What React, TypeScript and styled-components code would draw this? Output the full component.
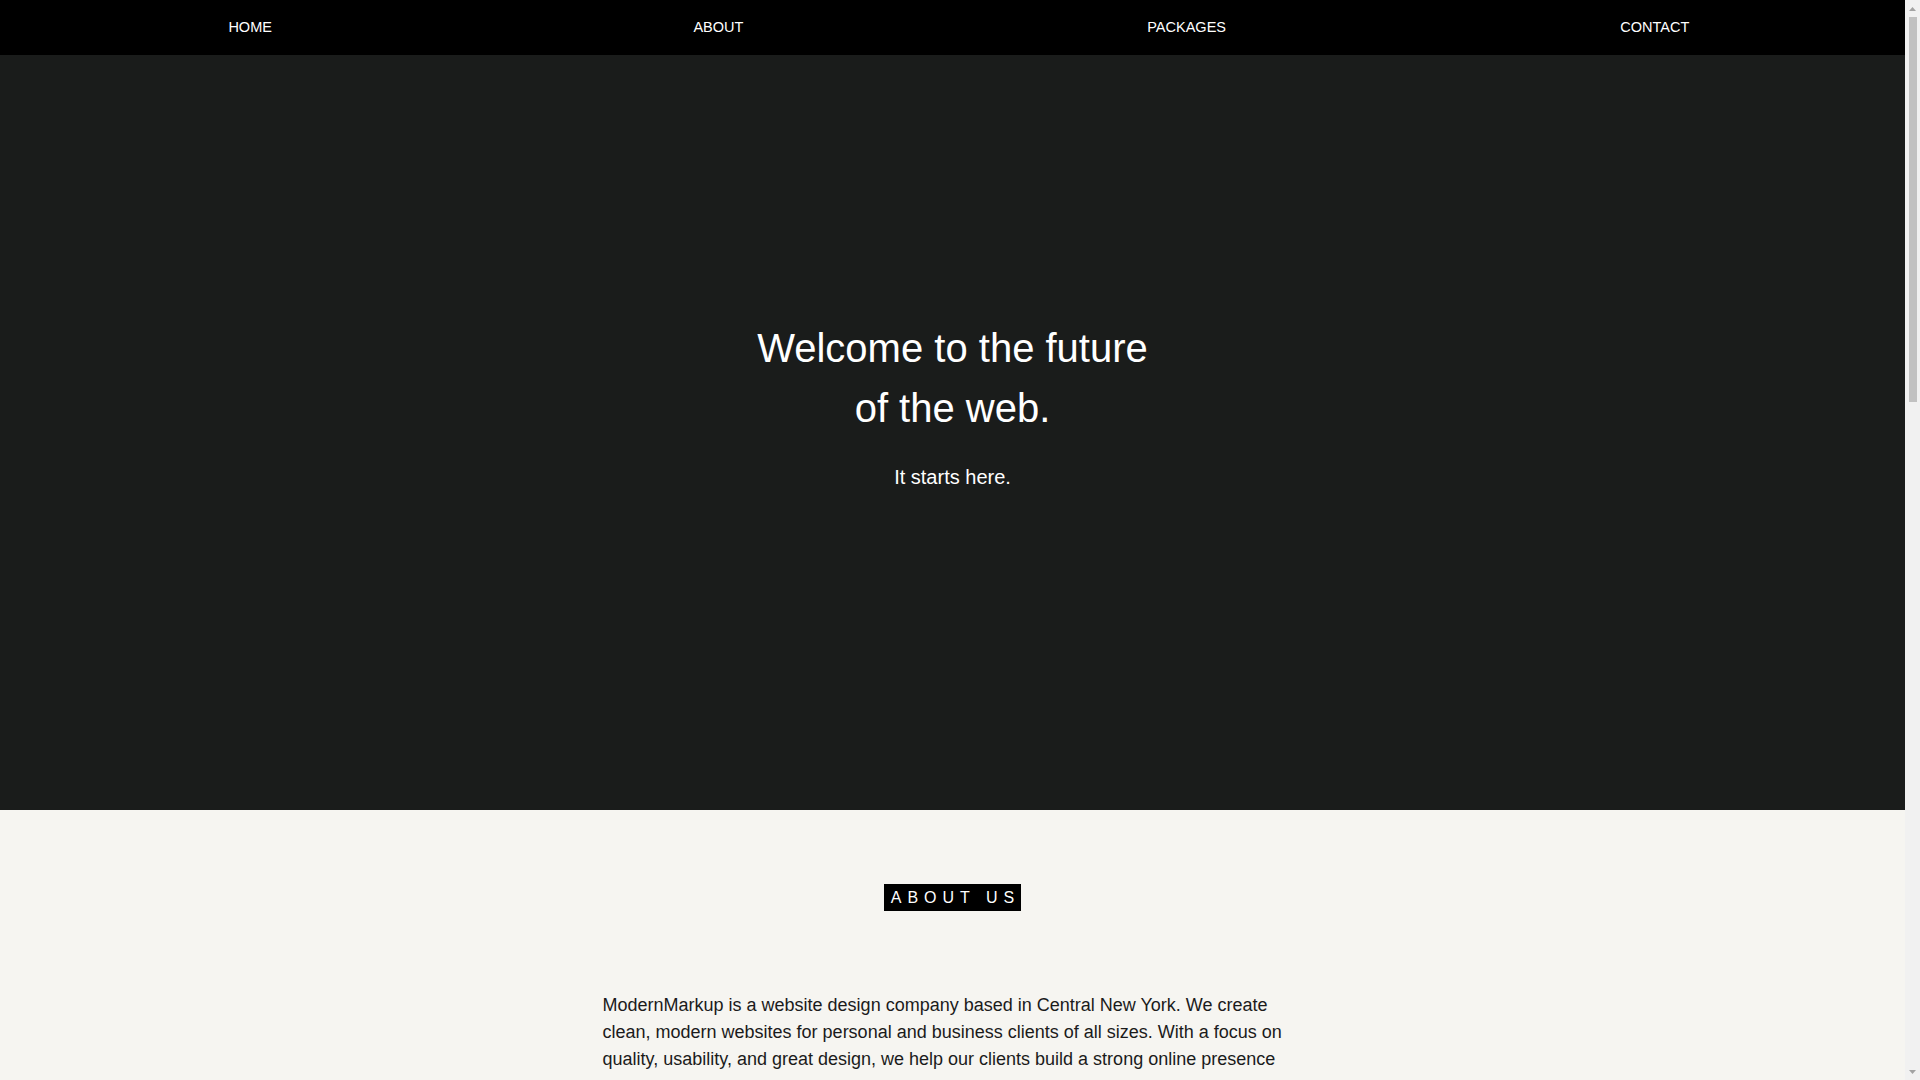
import React from 'react'
import styled, { createGlobalStyle } from 'styled-components'

const GlobalStyle = createGlobalStyle`
  html, body {
    margin: 0;
    padding: 0;
  }
  body {
    margin-right: 15px;
    font-family: "Liberation Sans", Arial, sans-serif;
    background: #f6f5f1;
    color: #1b1b1b;
  }
  * {
    box-sizing: border-box;
  }
`

// the browser's own scroll bar, drawn over the right edge
const Scrollbar = styled.div`
  position: fixed;
  top: 0;
  right: 0;
  width: 15px;
  height: 100vh;
  display: flex;
  flex-direction: column;
  align-items: center;
  background: #f1f1f1;
`

const ScrollArrow = styled.div`
  display: flex;
  align-items: center;
  justify-content: center;
  width: 15px;
  height: 17px;
  flex-shrink: 0;
`

const ScrollTrack = styled.div`
  flex: 1;
  width: 100%;
  display: flex;
  justify-content: center;
`

const ScrollThumb = styled.div`
  width: 8px;
  height: 385px;
  background: #c1c1c1;
`

const Nav = styled.nav`
  display: flex;
  height: 55px;
  padding: 0 16px;
  background: #000;
`

const NavLink = styled.a`
  flex: 1;
  text-align: center;
  line-height: 55px;
  font-size: 14.5px;
  color: #fff;
  text-decoration: none;
  text-transform: uppercase;
`

const Hero = styled.header`
  display: flex;
  flex-direction: column;
  align-items: center;
  height: 755px;
  padding-top: 263px;
  background: #1a1c1b;
  color: #fff;
  text-align: center;
`

const HeroTitle = styled.h1`
  margin: 0;
  font-size: 40px;
  font-weight: 400;
  line-height: 60px;
`

const HeroSub = styled.p`
  margin: 24px 0 0;
  font-size: 20px;
  line-height: 30px;
`

const Section = styled.section<{ $dark?: boolean; $height: number }>`
  min-height: ${p => p.$height}px;
  padding: 74px 0 80px;
  background: ${p => (p.$dark ? '#1a1c1b' : '#f6f5f1')};
  color: ${p => (p.$dark ? '#fff' : '#1b1b1b')};
  text-align: center;
`

const Label = styled.h2<{ $dark?: boolean }>`
  display: inline-block;
  margin: 0;
  padding: 0 1px 0 7px;
  font-size: 16px;
  font-weight: 400;
  line-height: 27px;
  letter-spacing: 6px;
  background: ${p => (p.$dark ? '#fff' : '#000')};
  color: ${p => (p.$dark ? '#000' : '#fff')};
`

const Body = styled.div`
  max-width: 700px;
  margin: 81px auto 0;
  text-align: left;
  font-size: 18px;
  line-height: 27px;

  p {
    margin: 0 0 27px;
  }
`

const PackageGrid = styled.div`
  display: grid;
  grid-template-columns: repeat(3, 300px);
  justify-content: center;
  gap: 40px;
  margin-top: 81px;
`

const PackageCard = styled.div`
  padding: 40px 30px;
  background: #fff;
  color: #1b1b1b;
  text-align: left;
  font-size: 16px;
  line-height: 26px;

  h3 {
    margin: 0 0 16px;
    font-size: 22px;
    font-weight: 400;
  }
`

const packages = [
  { name: 'Starter', text: 'A clean single-page site for individuals and small projects.' },
  { name: 'Business', text: 'A multi-page website with contact forms and custom design.' },
  { name: 'Premium', text: 'A complete online presence with ongoing support and updates.' },
]

const Arrow = ({ down }: { down?: boolean }) => (
  <svg width="7" height="4" viewBox="0 0 7 4">
    <path d={down ? 'M0 0h7L3.5 4z' : 'M0 4h7L3.5 0z'} fill="#a3a3a3" />
  </svg>
)

export default function App() {
  return (
    <>
      <GlobalStyle />
      <Nav>
        <NavLink href="#home">Home</NavLink>
        <NavLink href="#about">About</NavLink>
        <NavLink href="#packages">Packages</NavLink>
        <NavLink href="#contact">Contact</NavLink>
      </Nav>
      <Hero id="home">
        <HeroTitle>
          Welcome to the future
          <br />
          of the web.
        </HeroTitle>
        <HeroSub>It starts here.</HeroSub>
      </Hero>
      <Section id="about" $height={700}>
        <Label>ABOUT US</Label>
        <Body>
          <p>
            ModernMarkup is a website design company based in Central New York. We create clean,
            modern websites for personal and business clients of all sizes. With a focus on
            quality, usability, and great design, we help our clients build a strong online presence
            across every screen, so more users come your way.
          </p>
          <p>
            Every site we build is responsive, fast and easy to manage, so it looks great on any
            device and grows with your business.
          </p>
        </Body>
      </Section>
      <Section id="packages" $dark $height={800}>
        <Label $dark>PACKAGES</Label>
        <PackageGrid>
          {packages.map(pkg => (
            <PackageCard key={pkg.name}>
              <h3>{pkg.name}</h3>
              {pkg.text}
            </PackageCard>
          ))}
        </PackageGrid>
      </Section>
      <Section id="contact" $height={590}>
        <Label>CONTACT</Label>
        <Body>
          <p>Ready to get started? Get in touch and let's talk about your next website.</p>
        </Body>
      </Section>
      <Scrollbar aria-hidden>
        <ScrollArrow>
          <Arrow />
        </ScrollArrow>
        <ScrollTrack>
          <ScrollThumb />
        </ScrollTrack>
        <ScrollArrow>
          <Arrow down />
        </ScrollArrow>
      </Scrollbar>
    </>
  )
}
